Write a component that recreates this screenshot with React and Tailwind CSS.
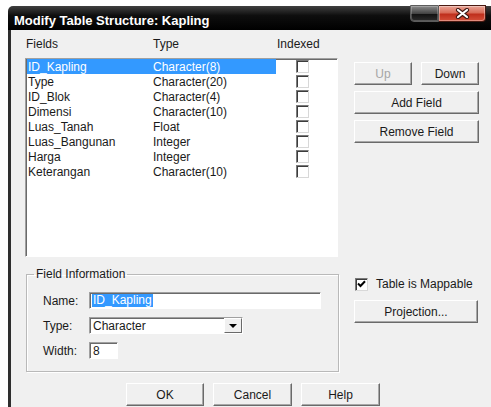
const fields = [
  ["ID_Kapling", "Character(8)"],
  ["Type", "Character(20)"],
  ["ID_Blok", "Character(4)"],
  ["Dimensi", "Character(10)"],
  ["Luas_Tanah", "Float"],
  ["Luas_Bangunan", "Integer"],
  ["Harga", "Integer"],
  ["Keterangan", "Character(10)"],
];

function Button({ children, className = "", disabled = false }) {
  return (
    <div
      className={`flex h-[23px] items-center justify-center border border-t-white border-l-white border-r-[#6a6a6a] border-b-[#6a6a6a] bg-[#f0f0f0] shadow-[inset_-1px_-1px_0_#a8a8a8] ${
        disabled ? "text-[#a6a6a6]" : "text-[#1a1a1a]"
      } ${className}`}
    >
      {children}
    </div>
  );
}

function CheckBox({ checked = false }) {
  return (
    <div className="flex h-[13px] w-[13px] items-center justify-center border border-t-[#7a7a7a] border-l-[#7a7a7a] border-r-[#d8d8d8] border-b-[#d8d8d8] bg-white shadow-[inset_1px_1px_0_#3c3c3c]">
      {checked && (
        <svg width="9" height="8" viewBox="0 0 9 8">
          <path d="M1 3.5 3.5 6 8 1.2" fill="none" stroke="#000" strokeWidth="2" />
        </svg>
      )}
    </div>
  );
}

function TitleBar() {
  return (
    <div className="flex h-[24px] items-start justify-between rounded-tl-[5px] bg-[linear-gradient(#404040,#0e0e0e_40%,#000)] pl-[6px] pr-[5px]">
      <span className="pt-[8px] text-[13px] font-bold leading-[13px] text-white">
        Modify Table Structure: Kapling
      </span>
      <div className="-mt-[1px] flex h-[17px]">
        <div className="w-[29px] rounded-bl-[4px] border border-[#5c5c5c] bg-[linear-gradient(#8c8c8c,#444_50%,#121212_55%,#2c2c2c)] shadow-[inset_0_0_0_1px_rgba(255,255,255,0.22)]" />
        <div className="flex w-[47px] items-center justify-center rounded-br-[4px] border border-l-0 border-[#4a1a12] bg-[linear-gradient(#eaa597,#d86b57_45%,#bf2f1c_55%,#d4503a)] shadow-[inset_0_0_0_1px_rgba(255,255,255,0.35)]">
          <svg width="15" height="11" viewBox="0 0 15 11">
            <path d="M3 2 12 9M12 2 3 9" stroke="#3b1712" strokeWidth="4.2" strokeLinecap="round" />
            <path d="M3 2 12 9M12 2 3 9" stroke="#fff" strokeWidth="2.2" strokeLinecap="round" />
          </svg>
        </div>
      </div>
    </div>
  );
}

const sunken =
  "border border-t-[#a0a0a0] border-l-[#a0a0a0] border-r-white border-b-white shadow-[inset_1px_1px_0_#6a6a6a] bg-white";

export default function App() {
  return (
    <div className="h-[407px] w-[491px] overflow-hidden bg-white pl-[8px] pt-[6px] font-['Liberation_Sans',Arial,sans-serif] text-[12px] leading-[14px] text-[#1a1a1a]">
      <div className="flex h-[401px] flex-col">
        <TitleBar />
        <div className="flex-1 border-l-[3px] border-[#2e2e2e] bg-[#f0f0f0] pl-[14px] pt-[7px]">
          {/* field list and its buttons */}
          <div className="flex">
            <div className="w-[313px]">
              <div className="flex h-[21px] pl-[1px]">
                <span className="w-[127px]">Fields</span>
                <span className="w-[124px]">Type</span>
                <span>Indexed</span>
              </div>
              <div className={`h-[199px] pl-[1px] ${sunken}`}>
                {fields.map(([name, type], i) => (
                  <div key={name} className="flex h-[15px] items-center">
                    <div
                      className={`flex h-full w-[249px] items-center ${
                        i === 0 ? "bg-[#3399ff] text-white" : ""
                      }`}
                    >
                      <span className="w-[126px] pl-[1px]">{name}</span>
                      <span>{type}</span>
                    </div>
                    <div className="ml-[20px]">
                      <CheckBox />
                    </div>
                  </div>
                ))}
              </div>
            </div>
            <div className="ml-[16px] mt-[25px] flex w-[125px] flex-col gap-[6px]">
              <div className="flex gap-[9px]">
                <Button className="w-[58px]" disabled>
                  Up
                </Button>
                <Button className="w-[58px]">Down</Button>
              </div>
              <Button>Add Field</Button>
              <Button>Remove Field</Button>
            </div>
          </div>

          {/* field details */}
          <div className="mt-[10px] flex">
            <fieldset className="ml-[1px] w-[313px] border border-[#b9b9b9] pb-[12px] shadow-[inset_1px_1px_0_#fff,1px_1px_0_#fff]">
              <legend className="ml-[7px] px-[2px] leading-[14px]">Field Information</legend>
              <div className="mt-[11px] flex flex-col gap-[8px] pl-[16px]">
                <div className="flex h-[17px] items-center">
                  <span className="w-[46px]">Name:</span>
                  <div className={`flex h-full w-[232px] items-center pl-[2px] ${sunken}`}>
                    <span className="bg-[#3399ff] px-[1px] leading-[13px] text-white">ID_Kapling</span>
                  </div>
                </div>
                <div className="flex h-[17px] items-center">
                  <span className="w-[46px]">Type:</span>
                  <div className={`flex h-full w-[154px] items-center justify-between pl-[3px] ${sunken}`}>
                    <span>Character</span>
                    <div className="flex h-full w-[18px] items-center justify-center border border-t-white border-l-white border-r-[#6a6a6a] border-b-[#6a6a6a] bg-[#f0f0f0]">
                      <svg width="8" height="4" viewBox="0 0 8 4">
                        <path d="M0 0h8L4 4z" fill="#000" />
                      </svg>
                    </div>
                  </div>
                </div>
                <div className="flex h-[17px] items-center">
                  <span className="w-[46px]">Width:</span>
                  <div className={`flex h-full w-[29px] items-center pl-[3px] ${sunken}`}>8</div>
                </div>
              </div>
            </fieldset>
            <div className="ml-[15px] flex w-[124px] flex-col">
              <div className="mt-[10px] flex items-center gap-[8px] pl-[1px]">
                <CheckBox checked />
                <span>Table is Mappable</span>
              </div>
              <Button className="mt-[9px]">Projection...</Button>
            </div>
          </div>

          {/* dialog buttons */}
          <div className="mt-[11px] flex gap-[9px] pl-[101px]">
            <Button className="w-[78px]">OK</Button>
            <Button className="w-[79px]">Cancel</Button>
            <Button className="w-[79px]">Help</Button>
          </div>
        </div>
      </div>
    </div>
  );
}
